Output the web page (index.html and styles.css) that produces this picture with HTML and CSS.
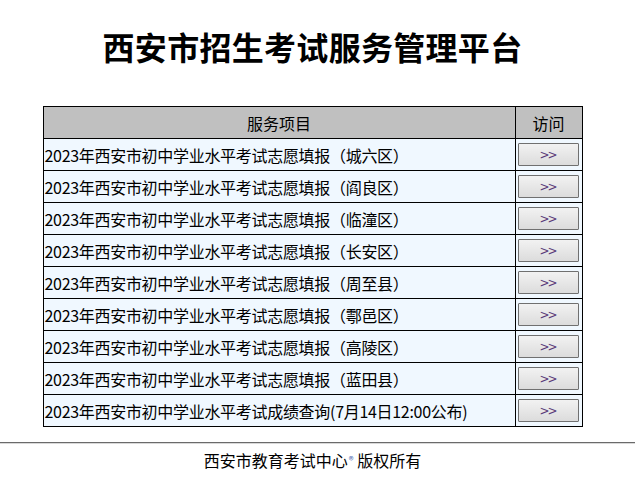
FILE: index.html
```html
<!DOCTYPE html>
<html lang="zh-CN">
<head>
<meta charset="utf-8">
<title>西安市招生考试服务管理平台</title>
<link rel="stylesheet" href="styles.css">
</head>
<body>
<div class="page">
  <h1 class="title">西安市招生考试服务管理平台</h1>
  <table class="svc">
    <thead>
      <tr><th class="c-name">服务项目</th><th class="c-go">访问</th></tr>
    </thead>
    <tbody>
      <tr><td class="c-name">2023年西安市初中学业水平考试志愿填报（城六区）</td><td class="c-go"><button class="go">&gt;&gt;</button></td></tr>
      <tr><td class="c-name">2023年西安市初中学业水平考试志愿填报（阎良区）</td><td class="c-go"><button class="go">&gt;&gt;</button></td></tr>
      <tr><td class="c-name">2023年西安市初中学业水平考试志愿填报（临潼区）</td><td class="c-go"><button class="go">&gt;&gt;</button></td></tr>
      <tr><td class="c-name">2023年西安市初中学业水平考试志愿填报（长安区）</td><td class="c-go"><button class="go">&gt;&gt;</button></td></tr>
      <tr><td class="c-name">2023年西安市初中学业水平考试志愿填报（周至县）</td><td class="c-go"><button class="go">&gt;&gt;</button></td></tr>
      <tr><td class="c-name">2023年西安市初中学业水平考试志愿填报（鄠邑区）</td><td class="c-go"><button class="go">&gt;&gt;</button></td></tr>
      <tr><td class="c-name">2023年西安市初中学业水平考试志愿填报（高陵区）</td><td class="c-go"><button class="go">&gt;&gt;</button></td></tr>
      <tr><td class="c-name">2023年西安市初中学业水平考试志愿填报（蓝田县）</td><td class="c-go"><button class="go">&gt;&gt;</button></td></tr>
      <tr><td class="c-name">2023年西安市初中学业水平考试成绩查询(7月14日12:00公布)</td><td class="c-go"><button class="go">&gt;&gt;</button></td></tr>
    </tbody>
  </table>
</div>
<hr class="rule">
<div class="page">
  <p class="footer">西安市教育考试中心<span class="reg">®</span> 版权所有</p>
</div>
</body>
</html>
```

FILE: styles.css
```css
html, body {
  margin: 0;
  padding: 0;
  background: #fff;
}
body {
  font-family: "Noto Sans CJK SC", "Liberation Sans", sans-serif;
  color: #000;
}
.page {
  width: 625px;
}
.title {
  margin: 0;
  padding-top: 27px;
  height: 78px;
  box-sizing: border-box;
  text-align: center;
  font-family: "Noto Sans CJK SC", sans-serif;
  font-weight: 700;
  font-size: 32px;
  line-height: 38px;
  letter-spacing: 0.3px;
}
.svc {
  margin: 28px auto 0;
  width: 540px;
  border-collapse: collapse;
  font-size: 16px;
}
.svc th, .svc td {
  border: 1px solid #000;
  height: 32px;
  padding: 0;
  line-height: 20px;
  box-sizing: border-box;
}
.svc th {
  background: #c0c0c0;
  font-weight: 400;
  text-align: center;
}
.svc td {
  background: #f0f8ff;
}
.svc td.c-name {
  text-align: left;
  padding-left: 1px;
  letter-spacing: -0.3px;
}
.svc .c-go {
  width: 67px;
  text-align: center;
}
.go {
  display: block;
  margin: 0 auto;
  width: 61px;
  height: 23px;
  border: 1px solid #707070;
  border-radius: 1px;
  background: linear-gradient(#f2f2f2, #dcdcdc);
  font-family: "DejaVu Sans", sans-serif;
  font-size: 12px;
  color: #5a3a7a;
  letter-spacing: -2px;
  padding: 0 2px 0 0;
  line-height: 20px;
}
.rule {
  margin: 15px 0 0;
  border: 0;
  border-top: 1px solid #6a6a6a;
  border-bottom: 1px solid #d8d8d8;
  height: 0;
}
.footer {
  margin: 5px 0 0;
  text-align: center;
  font-size: 16px;
  line-height: 22px;
}
.reg {
  font-size: 10px;
  vertical-align: 3px;
  color: #4a6ab0;
  margin-left: 1px;
}
```
